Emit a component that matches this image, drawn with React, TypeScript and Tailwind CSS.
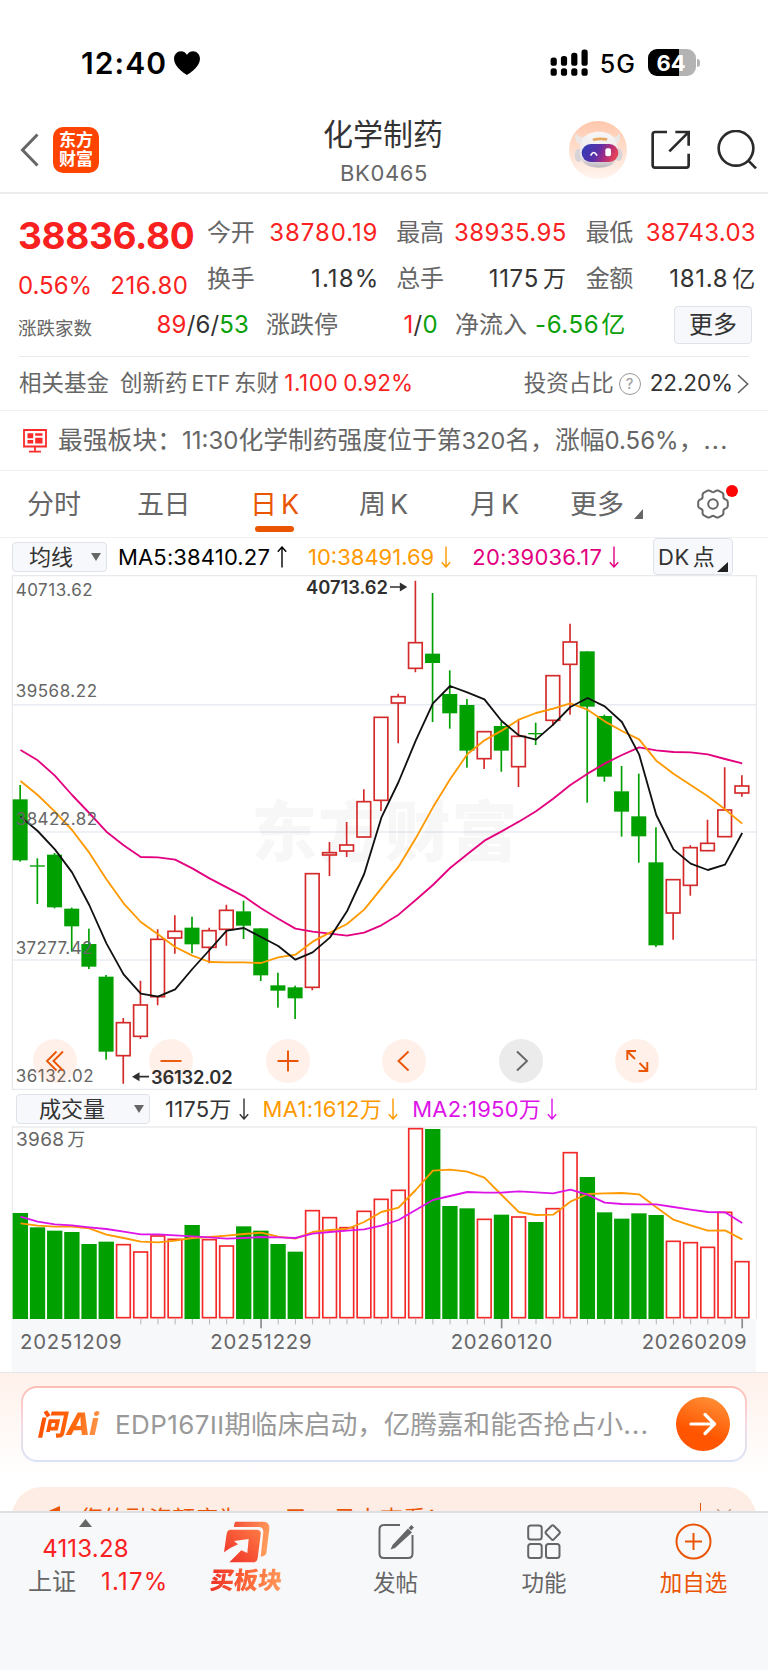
import React from "react";

type Candle = { up: boolean; high: number; top: number; bottom: number; low: number };

const STEP = 51.55;
const cx = (i: number) => 60.5 + STEP * i;

const c = (up: boolean, high: number, top: number, bottom: number, low: number): Candle => ({ up, high, top, bottom, low });

const candles: Candle[] = [
  c(false, 645, 688, 871, 875), c(false, 865, 886, 890, 1002), c(false, 849, 854, 1012, 1015),
  c(false, 1013, 1016, 1069, 1145), c(false, 1076, 1122, 1190, 1197), c(false, 1215, 1220, 1445, 1469),
  c(true, 1344, 1358, 1457, 1541), c(true, 1232, 1305, 1399, 1407), c(true, 1078, 1108, 1280, 1306),
  c(true, 1036, 1084, 1104, 1151), c(false, 1040, 1073, 1123, 1150), c(true, 1073, 1082, 1132, 1180),
  c(true, 1004, 1021, 1078, 1127), c(false, 992, 1024, 1067, 1107), c(false, 1075, 1075, 1216, 1233),
  c(false, 1208, 1246, 1262, 1313), c(false, 1247, 1252, 1285, 1347), c(true, 910, 911, 1252, 1261),
  c(true, 816, 848, 855, 918), c(true, 756, 825, 843, 861), c(true, 658, 695, 801, 803),
  c(true, 441, 442, 691, 723), c(true, 371, 380, 399, 520), c(true, 32, 218, 295, 307),
  c(false, 69, 251, 279, 456), c(false, 301, 372, 430, 476), c(false, 387, 405, 542, 593),
  c(true, 484, 485, 566, 597), c(false, 455, 468, 542, 605), c(true, 447, 499, 590, 651),
  c(false, 458, 489, 493, 525), c(true, 316, 317, 451, 468), c(true, 161, 216, 283, 434),
  c(false, 244, 244, 410, 698), c(false, 434, 438, 620, 635), c(false, 588, 664, 725, 800),
  c(false, 611, 739, 799, 878), c(false, 772, 877, 1126, 1131), c(true, 928, 929, 1029, 1109),
  c(true, 826, 833, 946, 977), c(true, 749, 820, 842, 844), c(true, 592, 720, 800, 801),
  c(true, 616, 648, 669, 680),
];

const ma5 = [740, 783, 838, 907, 1005, 1120, 1213, 1271, 1280, 1258, 1197, 1140, 1082, 1074, 1101, 1128, 1169, 1147, 1103, 1024, 912, 743, 636, 512, 400, 348, 367, 388, 453, 496, 509, 464, 411, 384, 409, 456, 553, 735, 838, 881, 900, 884, 789];
const ma10 = [633, 675, 725, 780, 848, 928, 1000, 1056, 1093, 1131, 1157, 1176, 1177, 1177, 1179, 1162, 1154, 1115, 1088, 1062, 1019, 955, 890, 805, 712, 628, 553, 511, 482, 449, 429, 416, 400, 419, 454, 483, 508, 572, 611, 645, 679, 718, 761];
const ma20 = [540, 571, 617, 675, 729, 785, 826, 861, 862, 869, 895, 925, 952, 979, 1015, 1046, 1076, 1085, 1091, 1097, 1088, 1066, 1034, 990, 945, 894, 853, 812, 784, 755, 724, 686, 645, 611, 581, 555, 532, 541, 546, 547, 553, 567, 580];

const volumes = [384, 427, 437, 441, 477, 470, 478, 500, 452, 462, 420, 463, 482, 424, 437, 477, 500, 376, 397, 427, 378, 342, 315, 130, 132, 363, 370, 402, 389, 395, 411, 370, 202, 276, 382, 401, 385, 390, 468, 472, 486, 381, 529];
const volMa1 = [415, 422, 425, 425, 430, 449, 459, 470, 472, 467, 459, 456, 452, 447, 443, 455, 461, 441, 435, 432, 411, 381, 368, 315, 257, 254, 260, 278, 330, 381, 390, 389, 350, 327, 325, 324, 328, 367, 404, 421, 437, 436, 463];
const volMa2 = [395, 410, 418, 421, 427, 432, 440, 448, 448, 451, 454, 457, 461, 459, 456, 457, 459, 446, 441, 437, 433, 422, 405, 375, 345, 333, 321, 323, 323, 319, 322, 325, 314, 329, 353, 357, 358, 358, 366, 374, 381, 382, 414];

const points = (values: number[]) => values.map((v, i) => `${cx(i) + 1},${v}`).join(" ");

const gearPath =
  Array.from({ length: 72 }, (_, i) => {
    const a = (i * 5 * Math.PI) / 180;
    const r = 13.5 + 1.2 * Math.cos(6 * a) - 0.5 * Math.cos(12 * a);
    return `${i ? "L" : "M"}${(16 + 1.04 * r * Math.cos(a)).toFixed(2)} ${(16 + r * Math.sin(a)).toFixed(2)}`;
  }).join(" ") + "Z";

function Arrow({ up = false }: { up?: boolean }) {
  return (
    <svg width="10" height="22" viewBox="0 0 10 22" fill="none" stroke="currentColor" strokeWidth="1.4" className={up ? "rotate-180" : ""}>
      <path d="M5 0.5V21M0.8 16.2L5 21L9.2 16.2" />
    </svg>
  );
}

function StatusBar() {
  return (
    <div className="flex h-[110px] items-center justify-between pt-[15px] pr-[68px] pl-[81px]">
      <div className="flex items-center gap-[7px]">
        <span className="text-[30px] leading-none font-semibold tracking-[1.1px] text-black">12:40</span>
        <svg width="26" height="24" viewBox="0 0 27 25" fill="#000">
          <path d="M13.5 25C11.7 24.2 0 16.8 0 8.2C0 3.6 3.2 0.3 7.2 0.3C10 0.3 12.4 1.9 13.5 4.2C14.6 1.9 17 0.3 19.8 0.3C23.8 0.3 27 3.6 27 8.2C27 16.8 15.3 24.2 13.5 25Z" />
        </svg>
      </div>
      <div className="flex items-center">
        <svg width="38" height="27" viewBox="0 0 38 27" fill="#000">
          {[8.6, 7, 3.8, 0.4].map((y, i) => (
            <g key={i}>
              <rect x={0.6 + i * 10.3} y={y} width="6.2" height={16.8 - y} rx="2.6" />
              <rect x={0.6 + i * 10.3} y="19.2" width="6.2" height="7.6" rx="2.6" />
            </g>
          ))}
        </svg>
        <span className="mt-[3px] ml-[12px] text-[25px] leading-none font-medium tracking-[1px] text-black">5G</span>
        <div className="ml-[12px] flex h-[27px] w-[48px] items-center justify-center rounded-[9px] bg-[linear-gradient(90deg,#000_64%,#b3b3b3_64%)] pr-[2px]">
          <span className="text-[22px] leading-none font-bold text-white">64</span>
        </div>
        <div className="ml-[1px] h-[8px] w-[3px] rounded-r-full bg-[#b3b3b3]" />
      </div>
    </div>
  );
}

function Robot() {
  return (
    <svg width="58" height="58" viewBox="0 0 174 174">
      <defs>
        <linearGradient id="halo" x1="0" y1="0" x2="0" y2="1">
          <stop offset="0" stopColor="#ffc7ab" />
          <stop offset="1" stopColor="#fff5f0" />
        </linearGradient>
        <linearGradient id="visor" x1="0" y1="0" x2="1" y2="0.25">
          <stop offset="0" stopColor="#2a3fb8" />
          <stop offset="0.5" stopColor="#5b2fa8" />
          <stop offset="0.8" stopColor="#b32d78" />
          <stop offset="1" stopColor="#e0405a" />
        </linearGradient>
        <linearGradient id="shell" x1="0" y1="0" x2="0" y2="1">
          <stop offset="0" stopColor="#f8f7f7" />
          <stop offset="0.7" stopColor="#e8e5e7" />
          <stop offset="1" stopColor="#bdb8bd" />
        </linearGradient>
      </defs>
      <circle cx="87" cy="87" r="87" fill="url(#halo)" />
      <path d="M20 36C15 54 22 72 42 72L52 46C36 52 26 46 20 36ZM152 36C157 54 150 72 132 72L120 46C138 52 146 46 152 36Z" fill="#ece6e5" />
      <ellipse cx="29" cy="103" rx="12" ry="20" fill="#d8d3d6" />
      <ellipse cx="149" cy="101" rx="11" ry="19" fill="#d8d3d6" />
      <path d="M32 88C32 50 56 32 90 32C124 32 146 50 146 88C146 120 132 140 90 140C48 140 32 122 32 88Z" fill="url(#shell)" />
      <path d="M70 53Q92 47 116 52L113 59Q92 56 73 60Z" fill="#e9a660" />
      <rect x="38" y="69" width="110" height="54" rx="27" fill="url(#visor)" />
      <path d="M66 102Q74 87 83 102" fill="none" stroke="#fff" strokeWidth="5" strokeLinecap="round" />
      <rect x="109" y="82" width="17" height="24" rx="6" fill="#fff" />
    </svg>
  );
}

function Header() {
  return (
    <header className="mb-px grid h-[84px] grid-cols-[200px_1fr_200px] border-b-2 border-[#ededed]">
      <div className="flex items-center pb-[3px] pl-[20px]">
        <svg width="19" height="34" viewBox="0 0 19 34" fill="none" stroke="#666" strokeWidth="3">
          <path d="M17.5 1.5L2.5 17L17.5 32.5" />
        </svg>
        <div className="ml-[14px] flex size-[46px] flex-col items-center justify-center rounded-[10px] bg-[#ff4400] text-[17px] leading-[19px] font-bold text-white">
          <span>东方</span>
          <span>财富</span>
        </div>
      </div>
      <div className="flex flex-col items-center pt-[7px] pr-[2px]">
        <h1 className="h-[34px] text-[30px] leading-[34px] text-[#333]">化学制药</h1>
        <div className="mt-[9px] ml-[2px] h-[27px] text-[22px] leading-[27px] tracking-[0.6px] text-[#666]">BK0465</div>
      </div>
      <div className="flex items-center justify-end pr-[11px] pb-[3px]">
        <Robot />
        <svg className="ml-[24px]" width="39" height="39" viewBox="0 0 117 117" fill="none" stroke="#2b2b2b" strokeWidth="8">
          <path d="M48 6H12Q5 6 5 13V106Q5 113 12 113H106Q113 113 113 106V71M73 6H113V47M112 7L55 64" />
        </svg>
        <svg className="ml-[27px]" width="40" height="40" viewBox="0 0 120 120" fill="none" stroke="#2b2b2b" strokeWidth="8">
          <circle cx="57" cy="55" r="52" />
          <path d="M94 92L117 115" />
        </svg>
      </div>
    </header>
  );
}

function Stat({ label, value, tone }: { label: string; value: React.ReactNode; tone: string }) {
  return (
    <div className="flex h-[46px] items-center justify-between text-[24px] leading-none whitespace-nowrap">
      <span className="-tracking-[0.3px] text-[#666]">{label}</span>
      <span className={tone}>{value}</span>
    </div>
  );
}

function Quote() {
  return (
    <section>
      <div className="flex h-[107px]">
        <div className="w-[207px] pt-[21px] pl-[18px]">
          <div className="h-[40px] text-[37px] leading-[40px] font-bold -tracking-[0.35px] text-[#f92020]">38836.80</div>
          <div className="mt-[10px] flex h-[40px] items-center text-[24px] leading-none text-[#fa2222]">
            <span>0.56%</span>
            <span className="ml-[18px] tracking-[0.6px]">216.80</span>
          </div>
        </div>
        <div className="grid w-[548px] grid-cols-3 content-start gap-x-5 pt-[15px]">
          <Stat label="今开" value="38780.19" tone="tracking-[0.9px] -mr-[2px] text-[#fa2222]" />
          <Stat label="最高" value="38935.95" tone="tracking-[0.4px] -mr-[1px] text-[#fa2222]" />
          <Stat label="最低" value="38743.03" tone="tracking-[0.3px] -mr-[1px] text-[#fa2222]" />
          <Stat label="换手" value="1.18%" tone="tracking-[1.1px] -mr-[3px] text-[#333]" />
          <Stat label="总手" value={<>1175<span className="ml-[4px] text-[23px]">万</span></>} tone="tracking-[0.7px] -mr-[1px] text-[#333]" />
          <Stat label="金额" value={<>181.8<span className="ml-[4px] text-[23px]">亿</span></>} tone="tracking-[0.7px] -mr-[1px] text-[#333]" />
        </div>
      </div>
      <div className="flex h-[46px] items-center pr-[16px] pl-[18px] text-[24px] leading-none whitespace-nowrap text-[#666]">
        <span className="w-[74px] pt-[6px] text-[18.5px]">涨跌家数</span>
        <span className="w-[157px] text-right tracking-[0.15px] text-[#333]">
          <span className="text-[#fa2222]">89</span>/6/<span className="text-[#0aa00a]">53</span>
        </span>
        <span className="ml-[17px]">涨跌停</span>
        <span className="w-[100px] text-right tracking-[0.3px] text-[#333]">
          <span className="text-[#fa2222]">1</span>/<span className="text-[#0aa00a]">0</span>
        </span>
        <span className="ml-[17px]">净流入</span>
        <span className="ml-[8px] tracking-[0.6px] text-[#0aa00a]">-6.56<span className="ml-[2px]">亿</span></span>
        <span className="ml-auto flex h-[38px] w-[78px] items-center justify-center rounded-[4px] border border-[#dfe2ea] bg-[#f7f8fb] text-[#333]">更多</span>
      </div>
      <div className="mx-[19px] mt-2 border-t border-[#ebebeb]" />
      <div className="flex h-[53px] items-center pr-[19px] pl-[19px] text-[22.5px] leading-none whitespace-nowrap text-[#666]">
        <span>相关基金</span>
        <span className="ml-[11px]">创新药<span className="mx-[4px] text-[21px]">ETF</span>东财</span>
        <span className="ml-[5px] tracking-[0.6px] text-[#fa2222]">1.100</span>
        <span className="ml-[5px] text-[#fa2222]">0.92%</span>
        <span className="ml-auto">投资占比</span>
        <span className="ml-[5px] flex size-[22px] items-center justify-center rounded-full border-[1.5px] border-[#999] text-[15px] text-[#999]">?</span>
        <span className="ml-[9px] -tracking-[0.1px] text-[#333]">22.20%</span>
        <svg className="ml-[4px]" width="12" height="20" viewBox="0 0 12 20" fill="none" stroke="#666" strokeWidth="1.7">
          <path d="M1 1L10.6 10L1 19" />
        </svg>
      </div>
    </section>
  );
}

function News() {
  return (
    <div className="flex h-[61px] items-center border-y border-[#f0f0f0] pl-[23px] text-[24.8px] leading-none whitespace-nowrap text-[#666]">
      <svg width="24" height="24" viewBox="0 0 24 24" fill="none" stroke="#fb2b2b" strokeWidth="1.8">
        <path d="M1 1H23V17.5H1ZM12 17.5V22.5M6 22.6H18" />
        <path d="M4.5 4.2H10.2V9.2H4.5ZM12.2 4.2H19.5V6.8H12.2ZM4.5 11H10.2V14.5H4.5ZM12.2 8.8H19.5V14.5H12.2Z" fill="#fb2b2b" stroke="none" />
      </svg>
      <span className="ml-[11px]">
        最强板块：<span className="text-[24px]">11:30</span>化学制药强度位于第<span className="text-[23.5px]">320</span>名，涨幅<span className="text-[24px]">0.56%</span>，<span className="tracking-[1.2px]">...</span>
      </span>
    </div>
  );
}

function Tabs() {
  return (
    <nav className="flex h-[67px] items-center border-b border-[#f0f0f0] pl-[27px] text-[27px] leading-none whitespace-nowrap text-[#666]">
      <span className="w-[110px]">分时</span>
      <span className="w-[113px] -tracking-[0.5px]">五日</span>
      <span className="relative w-[109px] text-[#ea5504]">
        日<span className="ml-[4px]">K</span>
        <span className="absolute top-[35px] left-[5px] h-[6px] w-[39px] rounded-[3px] bg-[#ea5504]" />
      </span>
      <span className="w-[111px]">周<span className="ml-[4px]">K</span></span>
      <span className="w-[100px]">月<span className="ml-[4px]">K</span></span>
      <span>更多</span>
      <svg className="mt-[20px] ml-[10px]" width="9" height="10" viewBox="0 0 9 10"><path d="M9 0V10H0Z" fill="#666" /></svg>
      <span className="relative ml-[54px] h-[32px] w-[32px]">
        <svg width="32" height="32" viewBox="0 0 32 32" fill="none" stroke="#666" strokeWidth="2">
          <path d={gearPath} />
          <circle cx="16" cy="16" r="4.8" />
        </svg>
        <span className="absolute -top-[3px] -right-[9px] size-[12px] rounded-full bg-[#fb0505]" />
      </span>
    </nav>
  );
}

function Legend() {
  return (
    <div className="flex h-[37px] items-center pl-[12px] text-[22px] leading-none whitespace-nowrap">
      <div className="mt-px flex h-[30px] w-[95px] items-center justify-between rounded-[4px] border border-[#dfe2ea] bg-[#f7f8fb] pr-[5px] pl-[16px] text-[#333]">
        均线
        <svg width="10" height="8" viewBox="0 0 10 8"><path d="M0 0H10L5 8Z" fill="#666" /></svg>
      </div>
      <span className="ml-[11px] tracking-[0.15px] text-black">MA5:38410.27</span>
      <span className="ml-[7px] text-black"><Arrow up /></span>
      <span className="ml-[21px] text-[#ff9900]">10:38491.69</span>
      <span className="ml-[7px] text-[#ff9900]"><Arrow /></span>
      <span className="ml-[21px] tracking-[0.25px] text-[#e3007f]">20:39036.17</span>
      <span className="ml-[7px] text-[#e3007f]"><Arrow /></span>
      <div className="mr-[35px] ml-auto flex h-[37px] w-[80px] items-center rounded-[4px] border border-[#dfe2ea] bg-[#f7f8fb] pl-[4px] text-[#333]">
        <span className="tracking-[0.5px]">DK</span>
        <span className="ml-[3px]">点</span>
        <svg className="mt-[21px] ml-[2px]" width="11" height="10" viewBox="0 0 11 10"><path d="M11 0V10H0Z" fill="#222" /></svg>
      </div>
    </div>
  );
}

const axisLabels = [
  { text: "40713.62", y: 77, width: 231 },
  { text: "39568.22", y: 382, width: 244 },
  { text: "38422.82", y: 766, width: 244 },
  { text: "37277.42", y: 1152, width: 230 },
  { text: "36132.02", y: 1536, width: 234 },
];

const controls = [
  { path: "M20 2.5L10.5 12L20 21.5M13.5 2.5L4 12L13.5 21.5", muted: false },
  { path: "M1.5 12H22.5", muted: false },
  { path: "M1.5 12H22.5M12 1.5V22.5", muted: false },
  { path: "M16.5 2.5L6.5 12L16.5 21.5", muted: false },
  { path: "M8 2.5L18 12L8 21.5", muted: true },
  { path: "M11 2H2.3V11M2.5 2.5L10 10M13.5 22H22.3V13M22 21.5L14.5 14", muted: false },
];

function PriceChart() {
  return (
    <div className="relative h-[515px]">
      <svg width="768" height="515" viewBox="0 15 2304 1545">
        <g stroke="#e9ebf2" strokeWidth="4.5">
          <path d="M37 404H2268M37 786H2268M37 1170H2268" />
          <rect x="37" y="17" width="2232" height="1541" fill="none" stroke="#e6e8ec" strokeWidth="3.5" />
        </g>
        <text x="754" y="857" textLength="798" fontSize="198" fontWeight="900" fill="#000" fillOpacity="0.03">东方财富</text>
        {candles.map((k, i) => {
          const x = cx(i);
          if (!k.up) {
            return (
              <g key={i} fill="#00a000">
                <rect x={x - 2.5} y={k.high} width="5" height={k.low - k.high} />
                <rect x={x - 22.5} y={k.top} width="45" height={k.bottom - k.top} />
              </g>
            );
          }
          return (
            <g key={i} stroke="#d42a2a" strokeWidth="5" fill="none">
              <path d={`M${x} ${k.high}V${k.top}M${x} ${k.bottom}V${k.low}`} />
              <rect x={x - 20.5} y={k.top} width="41" height={k.bottom - k.top} />
            </g>
          );
        })}
        <g fill="none" strokeWidth="5.5" strokeLinejoin="round">
          <polyline points={points(ma20)} stroke="#e3007f" />
          <polyline points={points(ma10)} stroke="#ff9900" />
          <polyline points={points(ma5)} stroke="#111" />
        </g>
        <g fontSize="51" fill="#666">
          {axisLabels.map(({ text, y, width }) => (
            <text key={text} x="47" y={y} textLength={width}>{text}</text>
          ))}
        </g>
      </svg>
      <div className="absolute bottom-[7px] left-[32.5px] flex gap-[72.5px]">
        {controls.map(({ path, muted }, i) => (
          <span
            key={i}
            className={
              muted
                ? "flex size-[44px] items-center justify-center rounded-full bg-[#ebebeb] text-[#666]"
                : "flex size-[44px] items-center justify-center rounded-full bg-[#ff5a14]/9 text-[#ea5504]"
            }
          >
            <svg width="24" height="24" viewBox="0 0 24 24" fill="none" stroke="currentColor" strokeWidth="1.9">
              <path d={path} />
            </svg>
          </span>
        ))}
      </div>
      <svg className="absolute inset-0" width="768" height="515" viewBox="0 15 2304 1545">
        <g fontSize="55" fontWeight="600" fill="#2f2f2f">
          <text x="918" y="73" textLength="246">40713.62</text>
          <path d="M1170 51H1216M1202 42L1217 51L1202 60Z" stroke="#2f2f2f" strokeWidth="5" />
          <text x="453" y="1541" textLength="245">36132.02</text>
          <path d="M447 1520H402M416 1511L401 1520L416 1529Z" stroke="#2f2f2f" strokeWidth="5" />
        </g>
      </svg>
    </div>
  );
}

function VolumeLegend() {
  return (
    <div className="flex h-[36px] items-center pt-[2px] pl-[16px] text-[22px] leading-none whitespace-nowrap">
      <div className="flex h-[30px] w-[134px] items-center justify-between rounded-[4px] border border-[#dfe2ea] bg-[#f7f8fb] pr-[5px] pl-[22px] text-[#333]">
        成交量
        <svg width="10" height="8" viewBox="0 0 10 8"><path d="M0 0H10L5 8Z" fill="#666" /></svg>
      </div>
      <span className="ml-[15px] tracking-[0.2px] text-[#333]">1175万</span>
      <span className="ml-[7px] text-[#333]"><Arrow /></span>
      <span className="ml-[14px] tracking-[0.35px] text-[#ff9900]">MA1:1612万</span>
      <span className="ml-[6px] text-[#ff9900]"><Arrow /></span>
      <span className="ml-[14px] tracking-[0.25px] text-[#dd14e8]">MA2:1950万</span>
      <span className="ml-[6px] text-[#dd14e8]"><Arrow /></span>
    </div>
  );
}

function VolumeChart() {
  return (
    <svg className="block" width="768" height="246" viewBox="0 123 2304 738">
      <rect x="35" y="702" width="2233" height="160" fill="#f7f8fa" />
      <path d="M37 702V126H2269V702" fill="none" stroke="#ebecef" strokeWidth="4" />
      {volumes.map((top, i) =>
        candles[i].up ? (
          <rect key={i} x={cx(i) - 20} y={top + 1} width="41" height={697 - top} fill="#fff" stroke="#f22a2a" strokeWidth="5" />
        ) : (
          <rect key={i} x={cx(i) - 22.5} y={top} width="46" height={702 - top} fill="#00a000" />
        ),
      )}
      <g>
        {volumes.map((_, i) => {
          if (i < 7) return null;
          const major = i % 14 === 0;
          return <path key={i} d={`M${cx(i) + 1} 702V${major ? 730 : 718}`} strokeWidth={major ? 5 : 3} stroke={major ? "#8a8a8a" : "#b4b4b4"} />;
        })}
      </g>
      <g fill="none" strokeWidth="5.5" strokeLinejoin="round">
        <polyline points={points(volMa1)} stroke="#ff9900" />
        <polyline points={points(volMa2)} stroke="#dd14e8" />
      </g>
      <g fill="#666">
        <text x="48" y="183" fontSize="57" textLength="144">3968</text>
        <text x="202" y="183" fontSize="54">万</text>
        <g fontSize="61">
          <text x="60" y="792" textLength="305">20251209</text>
          <text x="631" y="792" textLength="304">20251229</text>
          <text x="1352" y="792" textLength="305">20260120</text>
          <text x="1925" y="792" textLength="315">20260209</text>
        </g>
      </g>
    </svg>
  );
}

function AskAi() {
  return (
    <section className="h-[139px] overflow-hidden border-t border-[#e6e4e4] bg-[linear-gradient(180deg,#fff1eb_0,#fff_105px)] pt-[13px]">
      <div className="mx-[21px] rounded-[16px] bg-[linear-gradient(180deg,#ffbdb2,#f3dbe4_50%,#d9e3f6)] p-[2px]">
        <div className="flex h-[72px] items-center rounded-[14px] bg-white pr-[15px] pl-[16px]">
          <span className="flex w-[62px] -skew-x-12 items-baseline bg-[linear-gradient(90deg,#ff5000,#ff6a10_60%,#ff9a50)] bg-clip-text text-[29px] leading-[36px] font-black tracking-[-1px] text-transparent">
            问<span className="text-[31px] leading-[36px] font-extrabold">Ai</span>
          </span>
          <span className="ml-[14px] text-[26.6px] leading-[36px] whitespace-nowrap text-[#999]">
            <span className="text-[26px] tracking-[0.4px]">EDP167</span>
            <span className="font-['Liberation_Sans'] text-[26px]">II</span>
            期临床启动，亿腾嘉和能否抢占小<span className="tracking-[1px]">...</span>
          </span>
          <span className="ml-auto flex size-[54px] items-center justify-center rounded-full bg-[linear-gradient(200deg,#ff9238_5%,#ff5500_65%)]">
            <svg width="28" height="24" viewBox="0 0 28 24" fill="none" stroke="#fff" strokeWidth="3.2" strokeLinecap="round" strokeLinejoin="round">
              <path d="M2 12H25M16 2.5L25.5 12L16 21.5" />
            </svg>
          </span>
        </div>
      </div>
      <div className="mx-[12px] mt-[25px] flex h-[60px] items-center rounded-[32px] bg-[#fdede4] pt-[5px] pr-[25px] pl-[32px] text-[23px] leading-none whitespace-nowrap text-[#ea5504]">
        <svg width="20" height="28" viewBox="0 0 20 28" fill="#ea5504">
          <path d="M0 7L16 0V28L0 20Z" />
        </svg>
        <span className="ml-[16px]">您的融资额度为</span>
        <span className="ml-[43px]">元，</span>
        <span className="ml-[4px]">马上查看！</span>
        <span className="mb-[6px] ml-auto h-[28px] w-px bg-[#ea5504]" />
        <svg className="ml-[16px]" width="14" height="22" viewBox="0 0 14 22" stroke="#c9a08c" strokeWidth="1.5"><path d="M0 0L14 14M14 0L0 14" /></svg>
      </div>
    </section>
  );
}

function BottomBar() {
  return (
    <footer className="flex h-[159px] border-t-2 border-[#dedfe2] bg-[#f7f8fa] text-[22.5px] leading-none whitespace-nowrap text-[#666]">
      <div className="flex w-[171px] flex-col items-center pt-[6px] text-[24px]">
        <svg width="13" height="8" viewBox="0 0 13 8"><path d="M6.5 0L13 8H0Z" fill="#666" /></svg>
        <span className="mt-[10px] tracking-[0.2px] text-[#fa2222]">4113.28</span>
        <span className="mt-[9px] ml-[23px] self-start">
          <span className="ml-[5px]">上证</span>
          <span className="ml-[25px] tracking-[1.2px] text-[#fa2222]">1.17%</span>
        </span>
      </div>
      <div className="flex w-[151px] flex-col items-center pt-[8px]">
        <svg width="46" height="42" viewBox="0 0 138 126">
          <defs>
            <linearGradient id="backTile" x1="0" y1="0" x2="1" y2="0.3">
              <stop offset="0" stopColor="#f4503a" />
              <stop offset="1" stopColor="#ff9a5a" />
            </linearGradient>
            <linearGradient id="frontTile" x1="0" y1="1" x2="1" y2="0">
              <stop offset="0" stopColor="#ee3028" />
              <stop offset="1" stopColor="#ff7a44" />
            </linearGradient>
          </defs>
          <path d="M34 2H116Q138 2 136 24L127 96Q125 106 110 107L118 34Q119 18 104 18H30Q30 6 34 2Z" fill="url(#backTile)" />
          <path d="M20 26H98Q112 26 110 40L101 112Q99 124 87 124H16L52 88L70 96L74 54L30 60L42 70Q22 78 0 94L8 38Q10 26 20 26Z" fill="url(#frontTile)" />
        </svg>
        <span className="mt-[4px] mr-[1px] -skew-x-6 bg-[linear-gradient(90deg,#ee3028,#ff6a3a_55%,#ff9a5a)] bg-clip-text px-px text-[24px] leading-[28px] font-black text-transparent">买板块</span>
      </div>
      <div className="flex w-[147px] flex-col items-center pt-[10px]">
        <svg width="36" height="37" viewBox="0 0 36 37" fill="none" stroke="#666" strokeWidth="2">
          <path d="M22 2H6Q1.5 2 1.5 6.5V30.5Q1.5 35 6 35H30Q34.5 35 34.5 30.5V12" />
          <path d="M30 5.5L34 9.5L17 25L12.5 26.5L14.5 22Z" fill="#666" stroke="none" />
          <path d="M32 3.5L34.5 6" strokeWidth="4" />
        </svg>
        <span className="mt-[12px]">发帖</span>
      </div>
      <div className="flex w-[150px] flex-col items-center pt-[11px]">
        <svg width="34" height="36" viewBox="0 0 34 36" fill="none" stroke="#666" strokeWidth="2">
          <rect x="1.2" y="1.5" width="13.5" height="14" rx="2.5" />
          <rect x="1.2" y="20" width="13.5" height="14" rx="2.5" />
          <rect x="19" y="20" width="13.5" height="14" rx="2.5" />
          <path d="M24.6 1.8Q25.7 0.8 26.8 1.8L32.5 7.5Q33.3 8.5 32.5 9.5L26.8 15.4Q25.7 16.4 24.6 15.4L18.9 9.5Q18.1 8.5 18.9 7.5Z" />
        </svg>
        <span className="mt-[12px]">功能</span>
      </div>
      <div className="flex w-[149px] flex-col items-center pt-[10px] text-[#ea5504]">
        <svg width="37" height="37" viewBox="0 0 37 37" fill="none" stroke="currentColor" strokeWidth="2">
          <circle cx="18.5" cy="18.5" r="17" />
          <path d="M18.5 10V27M10 18.5H27" />
        </svg>
        <span className="mt-[12px]">加自选</span>
      </div>
    </footer>
  );
}

export default function App() {
  return (
    <main className="h-[1670px] w-[768px] overflow-hidden bg-white font-['Inter','Noto_Sans_CJK_SC',sans-serif]">
      <StatusBar />
      <Header />
      <Quote />
      <News />
      <Tabs />
      <Legend />
      <PriceChart />
      <VolumeLegend />
      <VolumeChart />
      <AskAi />
      <BottomBar />
    </main>
  );
}
